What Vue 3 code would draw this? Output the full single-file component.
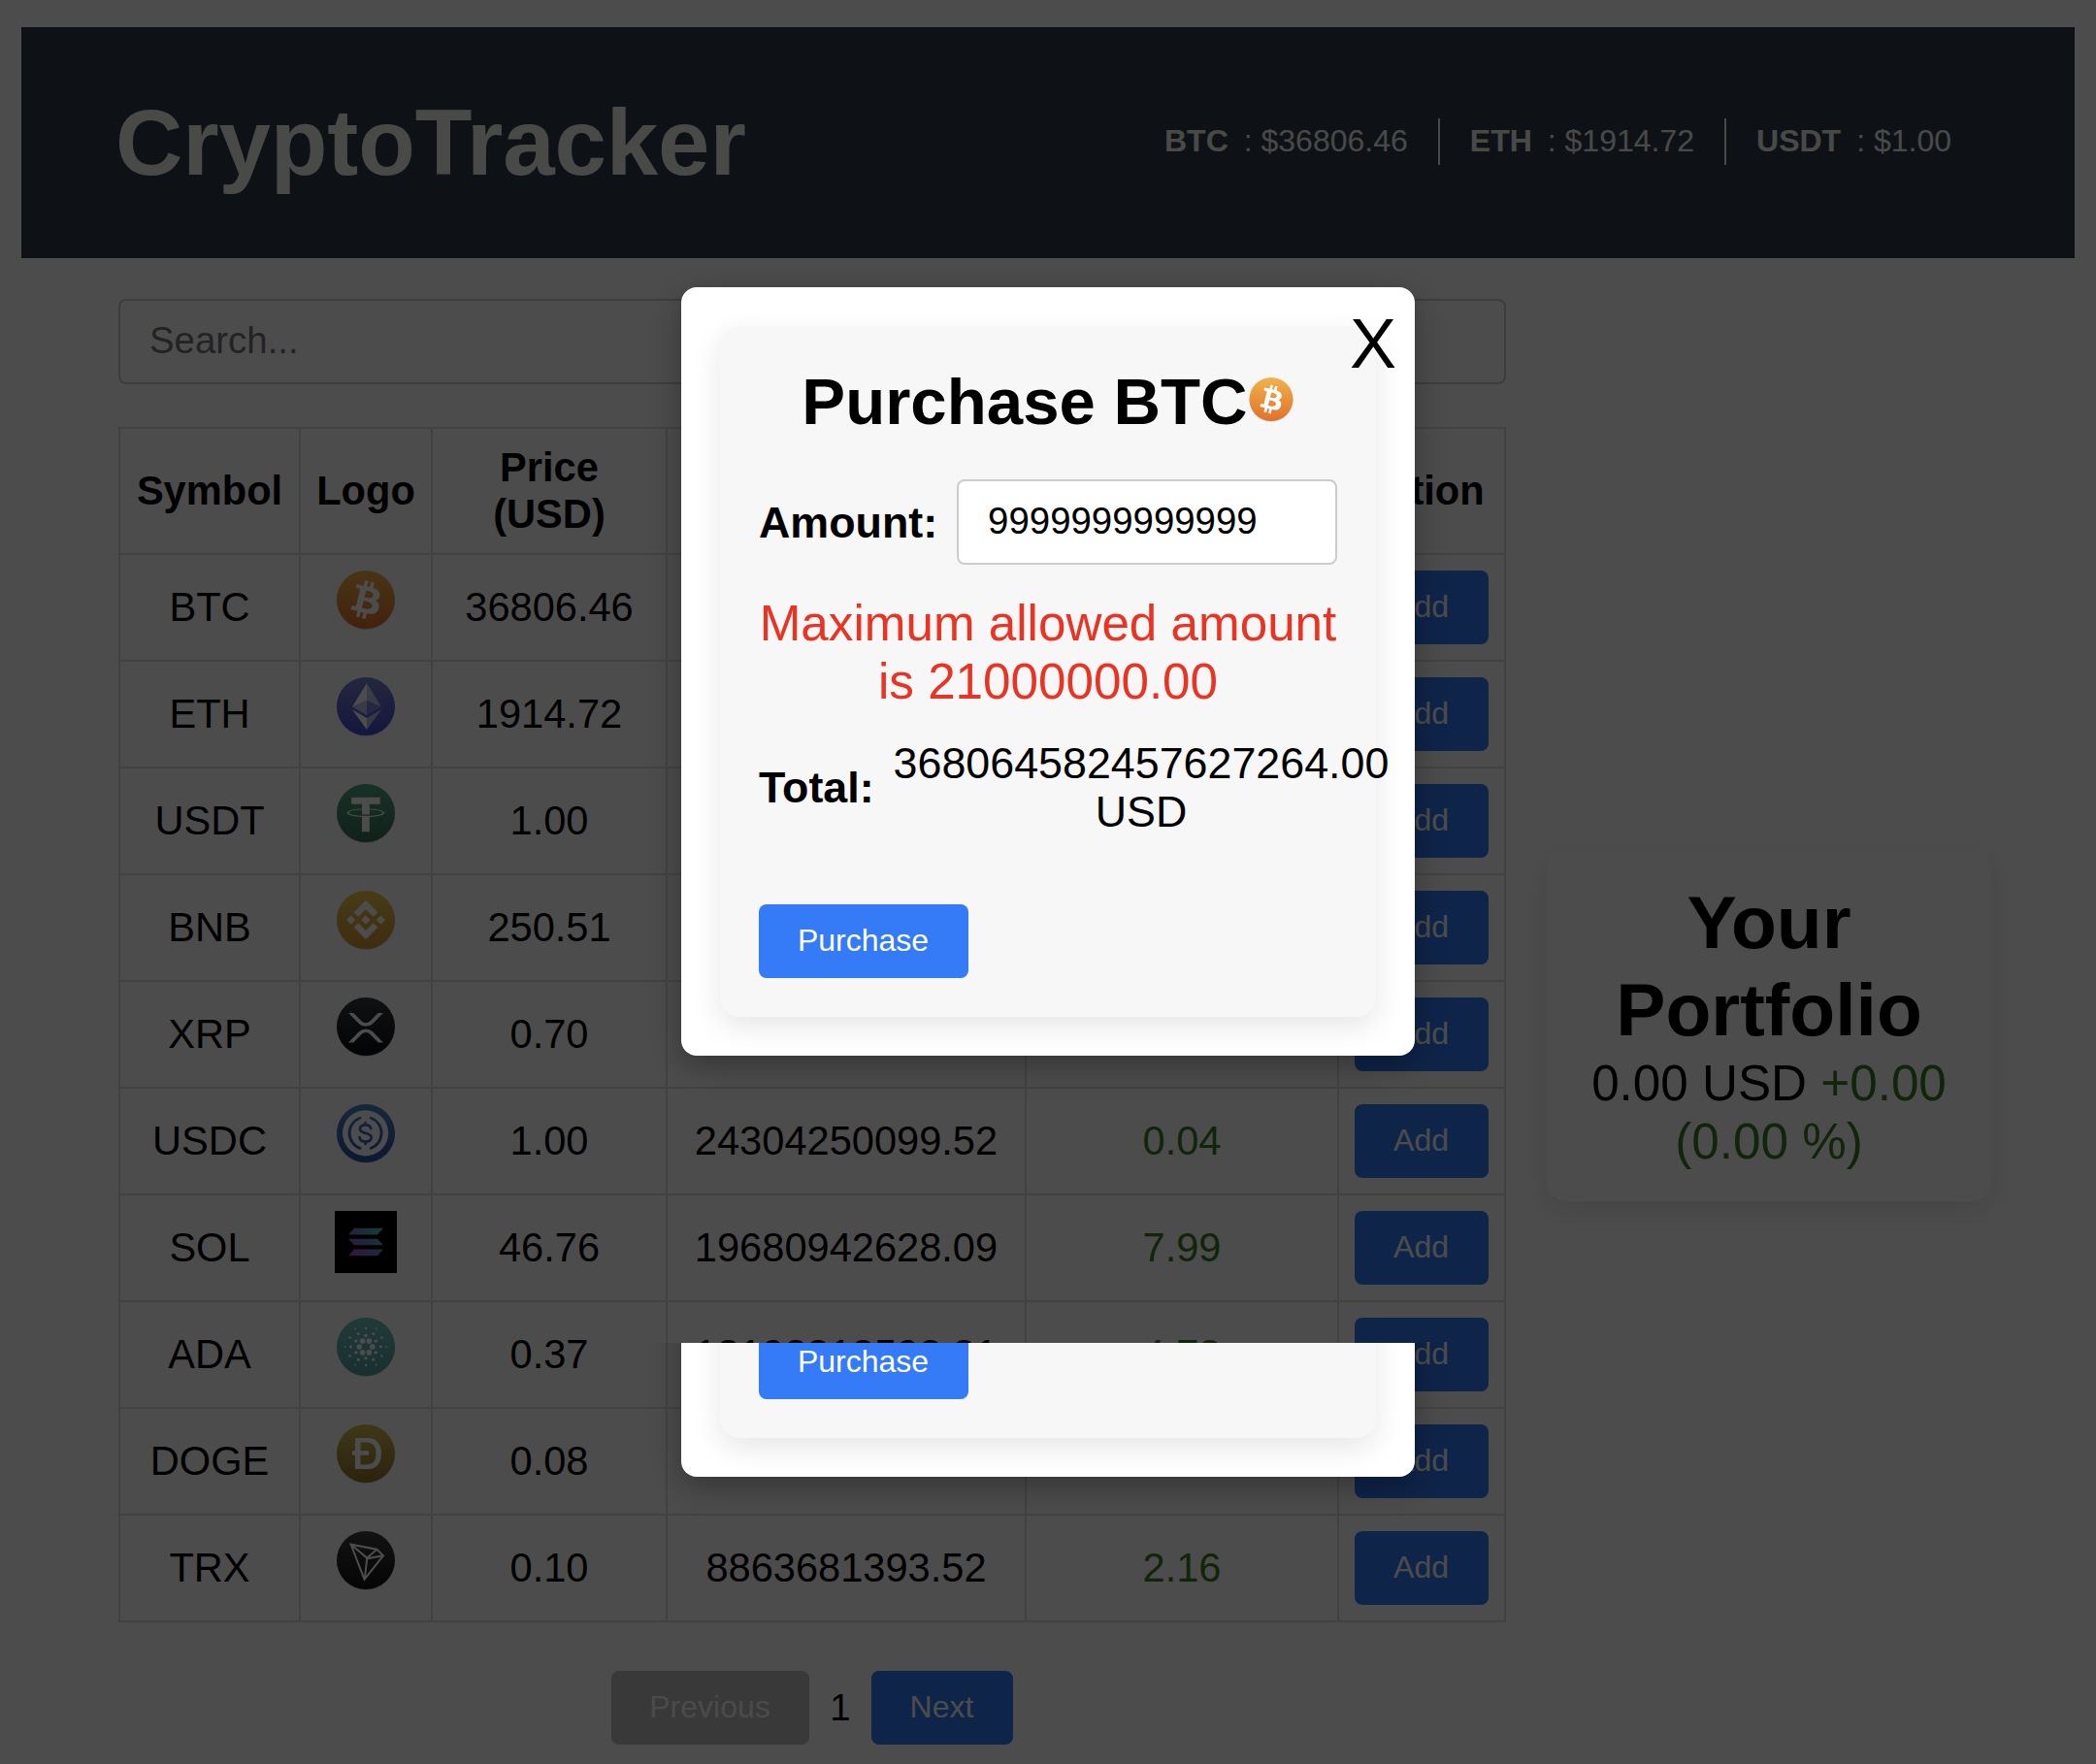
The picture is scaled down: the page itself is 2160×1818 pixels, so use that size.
<script setup>
import { ref } from 'vue'

const search = ref('')
const amount = ref('9999999999999')

const ticker = [
  { symbol: 'BTC', price: '$36806.46' },
  { symbol: 'ETH', price: '$1914.72' },
  { symbol: 'USDT', price: '$1.00' },
]

const coins = [
  { symbol: 'BTC', price: '36806.46' },
  { symbol: 'ETH', price: '1914.72' },
  { symbol: 'USDT', price: '1.00' },
  { symbol: 'BNB', price: '250.51' },
  { symbol: 'XRP', price: '0.70' },
  { symbol: 'USDC', price: '1.00', cap: '24304250099.52', change: '0.04' },
  { symbol: 'SOL', price: '46.76', cap: '19680942628.09', change: '7.99' },
  { symbol: 'ADA', price: '0.37', cap: '13198313598.31', change: '4.73' },
  { symbol: 'DOGE', price: '0.08' },
  { symbol: 'TRX', price: '0.10', cap: '8863681393.52', change: '2.16' },
]

// Round coin badges: gradient stops and white glyph paths on a 32-unit grid
const badges = [
  {
    id: 'BTC', top: '#f0b34c', bottom: '#e2702a',
    paths: [{ d: 'M23.189 14.02c.314-2.096-1.283-3.223-3.465-3.975l.708-2.84-1.728-.43-.69 2.765c-.454-.114-.92-.22-1.385-.326l.695-2.783L15.596 6l-.708 2.839c-.376-.086-.746-.17-1.104-.26l.002-.009-2.384-.595-.46 1.846s1.283.294 1.256.312c.7.175.826.638.805 1.006l-.806 3.235c.048.012.11.03.18.057l-.183-.045-1.13 4.532c-.086.212-.303.531-.793.41.018.025-1.256-.313-1.256-.313l-.858 1.978 2.25.561c.418.105.828.215 1.231.318l-.715 2.872 1.727.43.708-2.84c.472.127.93.245 1.378.357l-.706 2.828 1.728.43.715-2.866c2.948.558 5.164.333 6.097-2.333.752-2.146-.037-3.385-1.588-4.192 1.13-.26 1.98-1.003 2.207-2.538zm-3.95 5.538c-.533 2.147-4.148.986-5.32.695l.95-3.805c1.172.293 4.929.872 4.37 3.11zm.535-5.569c-.487 1.953-3.495.96-4.47.717l.86-3.45c.975.243 4.118.696 3.61 2.733z' }],
  },
  {
    id: 'ETH', top: '#7686cc', bottom: '#444bd2',
    paths: [
      { d: 'M16.498 4v8.87l7.497 3.35z', o: 0.6 },
      { d: 'M16.498 4L9 16.22l7.498-3.35z' },
      { d: 'M16.498 21.968v6.027L24 17.616z', o: 0.6 },
      { d: 'M16.498 27.995v-6.028L9 17.616z' },
      { d: 'M16.498 20.573l7.497-4.353-7.497-3.348z', o: 0.2 },
      { d: 'M9 16.22l7.498 4.353v-7.701z', o: 0.6 },
    ],
  },
  {
    id: 'USDT', top: '#53a686', bottom: '#376f57',
    paths: [{ d: 'M17.922 17.383v-.002c-.11.008-.677.042-1.942.042-1.01 0-1.721-.03-1.971-.042v.003c-3.888-.171-6.79-.848-6.79-1.658 0-.809 2.902-1.486 6.79-1.66v2.644c.254.018.982.061 1.988.061 1.207 0 1.812-.05 1.925-.06v-2.643c3.88.173 6.775.85 6.775 1.658 0 .81-2.895 1.485-6.775 1.657m0-3.59v-2.366h5.414V7.819H8.595v3.608h5.414v2.365c-4.4.202-7.709 1.074-7.709 2.118 0 1.044 3.309 1.915 7.709 2.118v7.582h3.913v-7.584c4.393-.202 7.694-1.073 7.694-2.116 0-1.043-3.301-1.914-7.694-2.117' }],
  },
  {
    id: 'BNB', top: '#edca50', bottom: '#d19436',
    paths: [{ d: 'M12.116 14.404L16 10.52l3.886 3.886 2.26-2.26L16 6l-6.144 6.144 2.26 2.26zM6 16l2.26-2.26L10.52 16l-2.26 2.26L6 16zm6.116 1.596L16 21.48l3.886-3.886 2.26 2.259L16 26l-6.144-6.144-.003-.003 2.263-2.257zM21.48 16l2.26-2.26L26 16l-2.26 2.26L21.48 16zm-3.188-.002h.002V16L16 18.294l-2.291-2.29-.004-.004.004-.003.401-.402.195-.195L16 13.706l2.293 2.293z' }],
  },
  {
    id: 'XRP', top: '#34383d', bottom: '#0c0e11', transform: 'translate(1.6 .6) scale(.9 .92)',
    paths: [{ d: 'M23.07 8h2.89l-6.015 5.957a5.621 5.621 0 01-7.89 0L6.035 8H8.93l4.57 4.523a3.556 3.556 0 004.996 0L23.07 8zM8.895 24.563H6l6.055-5.993a5.621 5.621 0 017.89 0L26 24.562h-2.895L18.5 20a3.556 3.556 0 00-4.996 0l-4.61 4.563z' }],
  },
  {
    id: 'DOGE', top: '#d2bc50', bottom: '#94752f',
    paths: [{ d: 'M13.248 14.61h4.314v2.286h-4.314v4.818h2.721c1.077 0 1.958-.145 2.644-.437.686-.291 1.224-.694 1.615-1.21a4.4 4.4 0 00.796-1.815 11.4 11.4 0 00.22-2.252c0-.769-.073-1.52-.22-2.252a4.396 4.396 0 00-.796-1.815c-.391-.516-.93-.919-1.615-1.21-.686-.292-1.567-.437-2.644-.437h-2.721v4.325zm-2.766 2.286H9v-2.285h1.482V8h6.549c1.21 0 2.257.21 3.142.627.885.419 1.607.99 2.168 1.715.56.724.977 1.572 1.25 2.543.273.971.409 2.01.409 3.115a11.47 11.47 0 01-.41 3.115c-.272.97-.689 1.819-1.25 2.543-.56.725-1.282 1.296-2.168 1.715-.884.418-1.931.627-3.142.627h-6.549v-7.104z' }],
  },
  {
    id: 'TRX', top: '#3e3e3e', bottom: '#121212', transform: 'translate(0 -1.3) scale(1 1.03)',
    paths: [{ d: 'M21.932 9.913L7.5 7.257l7.595 19.112 10.583-12.894-3.746-3.562zm-.232 1.17l2.208 2.099-6.038 1.093 3.83-3.192zm-5.142 2.973l-6.364-5.278 10.402 1.914-4.038 3.364zm-.453.934l-1.038 8.58L9.472 9.487l6.633 5.502zm.96.455l6.687-1.21-7.67 9.343.983-8.133z' }],
  },
]

// Cardano dots: five concentric hexagons, alternating by 30 degrees
const rings = [
  { r: 3.4, size: 1.4, start: 0 },
  { r: 5.9, size: 0.85, start: 30 },
  { r: 7.7, size: 0.75, start: 0 },
  { r: 9.5, size: 0.62, start: 30 },
  { r: 10.7, size: 0.48, start: 0 },
]
const dots = rings.flatMap(({ r, size, start }) =>
  [0, 60, 120, 180, 240, 300].map((step) => {
    const a = ((start + step) * Math.PI) / 180
    return { x: 16 + r * Math.cos(a), y: 15 + r * Math.sin(a), size }
  })
)

const panes = ['full', 'tail']
</script>

<template>
  <div class="page">
    <svg class="defs" width="0" height="0" aria-hidden="true">
      <defs>
        <linearGradient v-for="b in badges" :id="'g-' + b.id" :key="b.id" x1="0" y1="0" x2="0" y2="1">
          <stop offset="0" :stop-color="b.top" />
          <stop offset="1" :stop-color="b.bottom" />
        </linearGradient>
        <linearGradient id="g-USDC" x1="0" y1="0" x2="0" y2="30" gradientUnits="userSpaceOnUse">
          <stop offset="0" stop-color="#4a86c8" />
          <stop offset="1" stop-color="#2c4faa" />
        </linearGradient>
        <linearGradient id="g-ADA" x1="0" y1="0" x2="0" y2="1">
          <stop offset="0" stop-color="#70c2be" />
          <stop offset="1" stop-color="#529f9d" />
        </linearGradient>
        <linearGradient id="g-SOL" x1="8" y1="24" x2="24" y2="8" gradientUnits="userSpaceOnUse">
          <stop offset="0" stop-color="#b83fe0" />
          <stop offset=".5" stop-color="#6f7fd0" />
          <stop offset="1" stop-color="#4fd0a0" />
        </linearGradient>
      </defs>
      <symbol v-for="b in badges" :id="'coin-' + b.id" :key="b.id" viewBox="0 0 32 32">
        <circle cx="16" cy="15.4" r="15" fill="#000" opacity=".18" />
        <circle cx="16" cy="15" r="15" :fill="`url(#g-${b.id})`" />
        <g fill="#fff" :transform="b.transform || 'translate(0 -1)'">
          <path v-for="p in b.paths" :key="p.d" :d="p.d" :fill-opacity="p.o || 1" fill-rule="evenodd" />
        </g>
      </symbol>
      <symbol id="coin-USDC" viewBox="0 0 32 32">
        <circle cx="16" cy="15.4" r="15" fill="#000" opacity=".18" />
        <circle cx="16" cy="15" r="15" fill="url(#g-USDC)" />
        <circle cx="15.8" cy="14.9" r="11.8" fill="#fff" />
        <path d="M13 7.1a8.3 8.3 0 000 15.6M18.6 7.1a8.3 8.3 0 010 15.6" fill="none" stroke="url(#g-USDC)" stroke-width="1.4" stroke-linecap="round" />
        <path d="M18.6 12.6c-.2-1.3-1.3-1.9-2.8-1.9-1.700 0-2.800.800-2.800 2.100 0 3 5.800 1.200 5.800 4.300 0 1.400-1.200 2.200-3 2.200-1.700 0-2.900-.8-3-2.200M15.800 9.600v1.100M15.800 19.300v1.200" fill="none" stroke="url(#g-USDC)" stroke-width="1.350" stroke-linecap="round" />
      </symbol>
      <symbol id="coin-SOL" viewBox="0 0 32 32">
        <rect width="32" height="32" />
        <g fill="url(#g-SOL)">
          <path d="M10 8.9h15l-3 3.3H7z" />
          <path d="M7 14.4h15l3 3.2H10z" />
          <path d="M10 19.8h15l-3 3.3H7z" />
        </g>
      </symbol>
      <symbol id="coin-ADA" viewBox="0 0 32 32">
        <circle cx="16" cy="15.4" r="15" fill="#000" opacity=".18" />
        <circle cx="16" cy="15" r="15" fill="url(#g-ADA)" />
        <circle v-for="(d, i) in dots" :key="i" :cx="d.x" :cy="d.y" :r="d.size" fill="#fff" />
      </symbol>
    </svg>

    <header class="header">
      <h1 class="brand">CryptoTracker</h1>
      <div class="ticker">
        <div v-for="t in ticker" :key="t.symbol" class="quote">
          <strong>{{ t.symbol }}</strong><span>: {{ t.price }}</span>
        </div>
      </div>
    </header>

    <main class="main">
      <section class="market">
        <input v-model="search" class="field search" type="text" placeholder="Search..." />
        <table class="coins">
          <colgroup>
            <col class="c-symbol" /><col class="c-logo" /><col class="c-price" />
            <col class="c-cap" /><col class="c-change" /><col class="c-action" />
          </colgroup>
          <thead>
            <tr>
              <th>Symbol</th>
              <th>Logo</th>
              <th>Price (USD)</th>
              <th></th>
              <th></th>
              <th>Action</th>
            </tr>
          </thead>
          <tbody>
            <tr v-for="c in coins" :key="c.symbol">
              <td>{{ c.symbol }}</td>
              <td><svg class="logo"><use :href="'#coin-' + c.symbol" /></svg></td>
              <td>{{ c.price }}</td>
              <td>{{ c.cap }}</td>
              <td class="up">{{ c.change }}</td>
              <td><button class="btn add">Add</button></td>
            </tr>
          </tbody>
        </table>
        <nav class="pager">
          <button class="btn prev" disabled>Previous</button>
          <span class="num">1</span>
          <button class="btn next">Next</button>
        </nav>
      </section>

      <aside class="portfolio">
        <h2>Your Portfolio</h2>
        <p>0.00 USD <span class="up">+0.00 (0.00 %)</span></p>
      </aside>
    </main>

    <div class="overlay"></div>

    <div v-for="pane in panes" :key="pane" class="pane" :class="pane">
      <div class="modal">
        <button v-if="pane === 'full'" class="close">X</button>
        <div class="card">
          <template v-if="pane === 'full'">
            <h2 class="title">Purchase BTC<svg class="title-logo"><use href="#coin-BTC" /></svg></h2>
            <div class="row">
              <label>Amount:</label>
              <input v-model="amount" class="field amount" type="text" />
            </div>
            <p class="error">Maximum allowed amount is 21000000.00</p>
            <div class="row total">
              <label>Total:</label>
              <span class="sum">368064582457627264.00 USD</span>
            </div>
          </template>
          <button class="btn buy">Purchase</button>
        </div>
      </div>
    </div>
  </div>
</template>

<style>
body {
  margin: 0;
  background: #fff;
}
</style>

<style scoped>
.page {
  position: relative;
  box-sizing: border-box;
  width: 2160px;
  height: 1818px;
  padding: 28px 22px 0;
  overflow: hidden;
  background: #fff;
  color: #000;
  font-family: "Liberation Sans", Arial, Helvetica, sans-serif;
}
.page * {
  box-sizing: border-box;
}
.defs {
  position: absolute;
}
h1,
h2,
p {
  margin: 0;
}
.header {
  display: flex;
  align-items: center;
  justify-content: space-between;
  height: 238px;
  padding: 0 96px 0 97px;
  background: #2f3a4b;
  color: #f5f6f2;
}
.brand {
  font-size: 96px;
  line-height: 110px;
  letter-spacing: -0.1px;
}
.ticker {
  display: flex;
  margin-bottom: 2px;
}
.quote {
  display: flex;
  gap: 16px;
  height: 48px;
  padding: 0 31px;
  border-right: 2px solid #f5f6f2;
  font-size: 32px;
  line-height: 46px;
}
.quote:last-child {
  border-right: 0;
}
.main {
  display: flex;
  align-items: flex-start;
  gap: 42px;
  padding: 42px 0 0 100px;
}
.market {
  width: 1430px;
}
.field {
  display: block;
  height: 88px;
  padding: 0 30px 3px;
  border: 2px solid #ccc;
  border-radius: 8px;
  outline: 0;
  background: #fff;
  color: #000;
  font: 38.4px "Liberation Sans", Arial, sans-serif;
}
.field::placeholder {
  color: #757575;
  opacity: 1;
}
.search {
  width: 1430px;
}
.coins {
  width: 1430px;
  margin-top: 44px;
  border-collapse: collapse;
  table-layout: fixed;
  font-size: 41.6px;
  line-height: 48px;
  text-align: center;
}
.c-symbol { width: 186px; }
.c-logo { width: 136px; }
.c-price { width: 242px; }
.c-cap { width: 370px; }
.c-change { width: 322px; }
.c-action { width: 172px; }
th,
td {
  padding: 0 16px;
  border: 2px solid #ddd;
  vertical-align: middle;
}
th {
  height: 130px;
}
td {
  height: 110px;
}
.logo {
  display: block;
  width: 64px;
  height: 64px;
  margin: 0 20px 12px 19px;
}
.up {
  color: #377e22;
}
.btn {
  display: block;
  height: 76px;
  padding: 0 1px 2px 0;
  border: 0;
  border-radius: 8px;
  background: #357af6;
  color: #fff;
  font: 32px "Liberation Sans", Arial, sans-serif;
}
.btn:disabled {
  background: #bfbfbf;
  color: #fafafa;
}
.add {
  width: 138px;
  margin: 0 auto;
}
.pager {
  display: flex;
  align-items: center;
  justify-content: center;
  margin-top: 50px;
}
.prev {
  width: 204px;
}
.num {
  width: 64px;
  font-size: 38.4px;
  line-height: 44px;
  text-align: center;
}
.next {
  width: 146px;
}
.portfolio {
  width: 458px;
  height: 364px;
  margin-top: 566px;
  padding: 31px 40px;
  border-radius: 20px;
  background: #fff;
  box-shadow: 0 10px 30px rgba(0, 0, 0, 0.1);
  text-align: center;
}
.portfolio h2 {
  font-size: 76.8px;
  line-height: 90px;
}
.portfolio p {
  margin-top: 2px;
  font-size: 51.2px;
  line-height: 60px;
}
.overlay {
  position: absolute;
  inset: 0;
  background: rgba(0, 0, 0, 0.7);
}
.pane {
  position: absolute;
  left: 0;
  right: 0;
  display: flex;
  align-items: flex-start;
  justify-content: center;
  overflow: hidden;
}
.full {
  top: 0;
  height: 1384px;
  padding-top: 296px;
}
.tail {
  top: 1384px;
  bottom: 0;
}
.tail .modal {
  margin-top: -654px;
}
.modal {
  position: relative;
  width: 756px;
  height: 792px;
  padding: 40px;
  border-radius: 16px;
  background: #fff;
  box-shadow: 0 10px 30px rgba(0, 0, 0, 0.3);
}
.close {
  position: absolute;
  top: 17px;
  right: 19px;
  padding: 0;
  border: 0;
  background: none;
  color: #000;
  font: 72px/82px "Liberation Sans", Arial, sans-serif;
}
.card {
  display: flex;
  flex-direction: column;
  height: 712px;
  padding: 40px;
  border-radius: 20px;
  background: #f7f7f7;
  box-shadow: 0 10px 30px rgba(0, 0, 0, 0.1);
}
.title {
  height: 78px;
  font-size: 67.2px;
  line-height: 76px;
  text-align: center;
  white-space: nowrap;
}
.title-logo {
  width: 48px;
  height: 48px;
  vertical-align: baseline;
}
.row {
  display: flex;
  align-items: center;
  gap: 20px;
  margin-top: 40px;
  font-size: 44.8px;
  line-height: 50px;
}
.row label {
  font-weight: bold;
}
.amount {
  flex: 1;
  min-width: 0;
}
.error {
  margin: 31px -10px 0;
  padding: 0 10px;
  color: #ea3323;
  font-size: 51.2px;
  line-height: 60px;
  text-align: center;
}
.total {
  margin-top: 28px;
}
.sum {
  text-align: center;
}
.buy {
  width: 216px;
  margin-top: auto;
}
</style>
